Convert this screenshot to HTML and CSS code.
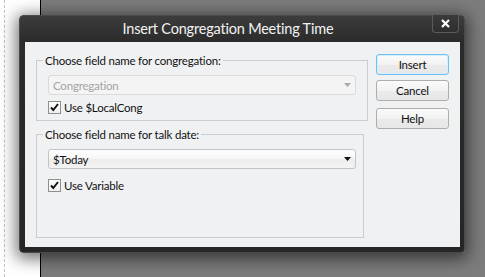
FILE: index.html
```html
<!DOCTYPE html>
<html lang="en">
<head>
  <meta charset="UTF-8">
  <title>Insert Congregation Meeting Time</title>
  <link rel="stylesheet" href="styles.css">
</head>
<body>
<div class="desk">
  <div class="margin-strip"><div class="margin-line"></div></div>
  <div class="pane"></div>

  <!-- Dialog window -->
  <div class="dialog">
    <div class="titlebar">
      <div class="title">Insert Congregation Meeting Time</div>
      <button class="close-btn" type="button">
        <svg width="9" height="9" viewBox="0 0 9 9"><path d="M1 1 L8 8 M8 1 L1 8" stroke="#fff" stroke-width="2.2" fill="none"/></svg>
      </button>
    </div>
    <div class="client">
      <div class="fields">
        <fieldset class="group group-cong">
          <legend>Choose field name for congregation:</legend>
          <div class="combo disabled">
            <span>Congregation</span>
            <svg class="arrow" width="7" height="4" viewBox="0 0 7 4"><path d="M0 0 H7 L3.5 4 Z" fill="#a9a9a9"/></svg>
          </div>
          <label class="check">
            <span class="box"><svg width="11" height="11" viewBox="0 0 11 11"><path d="M2 5.5 L4.3 8 L9 2" stroke="#111" stroke-width="1.9" fill="none"/></svg></span>
            Use $LocalCong
          </label>
        </fieldset>

        <fieldset class="group group-date">
          <legend>Choose field name for talk date:</legend>
          <div class="combo">
            <span>$Today</span>
            <svg class="arrow" width="7" height="4" viewBox="0 0 7 4"><path d="M0 0 H7 L3.5 4 Z" fill="#111"/></svg>
          </div>
          <label class="check">
            <span class="box"><svg width="11" height="11" viewBox="0 0 11 11"><path d="M2 5.5 L4.3 8 L9 2" stroke="#111" stroke-width="1.9" fill="none"/></svg></span>
            Use Variable
          </label>
        </fieldset>
      </div>

      <div class="buttons">
        <button class="btn default" type="button">Insert</button>
        <button class="btn" type="button">Cancel</button>
        <button class="btn help" type="button">Help</button>
      </div>
    </div>
  </div>
</div>
</body>
</html>
```

FILE: styles.css
```css
* {
  margin: 0;
  padding: 0;
  box-sizing: border-box;
}

body {
  font-family: Lato, 'Noto Sans', sans-serif;
  font-size: 11.5px;
  letter-spacing: -0.2px;
  color: #111;
  background: #fff;
  overflow: hidden;
}

/* Desktop behind the dialog */
.desk {
  position: relative;
  display: flex;
  width: 485px;
  height: 277px;
}

.margin-strip {
  width: 40px;
  padding-left: 4px;
  background: #fff;
}

.margin-line {
  height: 100%;
  border-left: 1px dashed #c4c4c4;
}

.pane {
  flex: 1;
  border-left: 1px solid #000;
  background: #7c7c7c;
}

/* Dialog window */
.dialog {
  position: absolute;
  left: 19px;
  top: 15px;
  width: 446px;
  height: 238px;
  display: flex;
  flex-direction: column;
  border: 1px solid #4a4a4a;
  border-radius: 4px;
  background: linear-gradient(#3c3c3c, #2b2b2b 26px, #262626);
  box-shadow: 0 3px 16px 3px rgba(0,0,0,0.55);
}

.titlebar {
  display: flex;
  height: 26px;
}

.title {
  flex: 1;
  text-align: center;
  color: #f2f2f2;
  font-size: 14.5px;
  line-height: 26px;
  padding-left: 4px;
}

.close-btn {
  width: 27px;
  height: 18px;
  margin-top: -1px;
  margin-right: 5px;
  border: 1px solid #5c5c5c;
  border-top: none;
  border-radius: 0 0 4px 4px;
  background: linear-gradient(#3b3b3b, #2e2e2e);
  display: flex;
  align-items: center;
  justify-content: center;
}

.client {
  flex: 1;
  display: flex;
  margin: 0 4px 5px 5px;
  background: #f0f1f3;
}

.fields {
  padding: 11px 0 0 11px;
}

/* Group boxes */
.group {
  border: 1px solid #cbcccd;
  padding: 7px 11px 6px 11px;
}

.group legend {
  margin-left: -5px;
  padding: 0 2px;
  line-height: 15px;
}

.group-cong {
  width: 332px;
}

.group-date {
  width: 328px;
  height: 111px;
  margin-top: 6px;
  padding-right: 7px;
}

.combo {
  width: 308px;
  height: 20px;
  display: flex;
  align-items: center;
  justify-content: space-between;
  padding: 0 4px 0 4px;
  border: 1px solid #c2c3c4;
  border-radius: 3px;
  background: linear-gradient(#ffffff, #f5f5f5 50%, #ededed 51%, #f3f3f3);
}

.combo.disabled {
  color: #a3a3a3;
  border-color: #d9dadb;
  background: #f4f4f5;
}

.check {
  display: flex;
  align-items: center;
  gap: 3px;
  height: 13px;
  margin-top: 6px;
}

.group-date .check {
  margin-top: 10px;
}

.box {
  width: 13px;
  height: 13px;
  border: 1px solid #8e8f8f;
  background: linear-gradient(#fdfdfd, #f0f0f0);
  display: flex;
  align-items: center;
  justify-content: center;
}

/* Command buttons */
.buttons {
  display: flex;
  flex-direction: column;
  gap: 5px;
  padding: 12px 0 0 8px;
}

.btn {
  width: 73px;
  height: 21px;
  font-family: inherit;
  font-size: 11.5px;
  letter-spacing: -0.2px;
  color: #111;
  border: 1px solid #adadad;
  border-radius: 3px;
  background: linear-gradient(#fbfbfb, #f2f2f2 50%, #eaeaea 51%, #e7e7e7);
}

.btn.default {
  border-color: #6fc0ee;
  box-shadow: inset 0 0 0 1px #d4eefb;
}

.btn.help {
  margin-top: 2px;
}
```
